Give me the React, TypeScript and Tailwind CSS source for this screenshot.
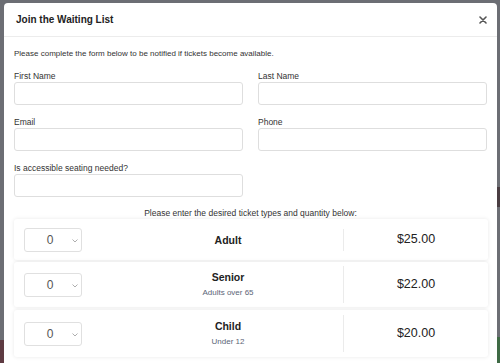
import React from 'react';

const tickets = [
  { name: 'Adult', note: '', price: '$25.00' },
  { name: 'Senior', note: 'Adults over 65', price: '$22.00' },
  { name: 'Child', note: 'Under 12', price: '$20.00' },
];

function Field({ label }: { label: string }) {
  return (
    <div>
      <div className="text-[8.5px] leading-[10px] text-[#333] mb-[1px]">{label}</div>
      <div className="h-[23px] rounded-[3px] border border-[#dedede] bg-white" />
    </div>
  );
}

export default function App() {
  return (
    <div
      className="relative h-[363px] w-[500px] overflow-hidden bg-[#6c6e74] pt-[3px] pl-[4px] pr-[3px]"
      style={{ fontFamily: '"Liberation Sans", Arial, sans-serif' }}
    >
      {/* bits of the page showing behind the overlay */}
      <div className="absolute left-0 top-[340px] h-[23px] w-[4px] bg-[#5e3b42]" />
      <div className="absolute right-0 top-[187px] h-[20px] w-[3px] bg-[#4a3d42]" />
      <div className="absolute right-0 top-[337px] h-[26px] w-[3px] bg-[#3f6a45]" />

      <div className="relative h-[400px] rounded-[4px] bg-white">
        <div className="flex h-[34px] items-center justify-between border-b border-[#ececec] pl-[12px] pr-[10px]">
          <h1 className="text-[10px] font-bold text-[#222]">Join the Waiting List</h1>
          <svg width="8" height="8" viewBox="0 0 8 8" className="mt-[1px]">
            <path d="M1 1L7 7M7 1L1 7" stroke="#555" strokeWidth="1.6" strokeLinecap="round" />
          </svg>
        </div>

        <div className="pl-[10px] pr-[10px] pt-[12px]">
          <p className="text-[8px] leading-[10px] text-[#333]">
            Please complete the form below to be notified if tickets become available.
          </p>

          <div className="mt-[12px] grid grid-cols-2 gap-x-[15px] gap-y-[12px]">
            <Field label="First Name" />
            <Field label="Last Name" />
            <Field label="Email" />
            <Field label="Phone" />
            <Field label="Is accessible seating needed?" />
          </div>

          <p className="mt-[11px] text-center text-[8.5px] leading-[10px] text-[#333]">
            Please enter the desired ticket types and quantity below:
          </p>

          <div className="mt-[1px] flex w-[474px] flex-col gap-[2px]">
            {tickets.map((t, i) => (
              <div
                key={t.name}
                className={`flex items-center rounded-[3px] bg-white shadow-[0_0_4px_rgba(0,0,0,0.09)] ${
                  i === 2 ? 'mt-[1px] py-[5px]' : 'py-[4px]'
                }`}
              >
                <div className="w-[99px] shrink-0 py-[4.5px] pl-[10px]">
                  <div className="relative flex h-[24px] w-[58px] items-center rounded-[3px] border border-[#e0e0e0] bg-white">
                    <span className="w-[50px] text-center text-[12px] text-[#555]">0</span>
                    <svg width="6" height="4" viewBox="0 0 6 4" className="absolute right-[3px] top-[10px]">
                      <path d="M0.5 0.5L3 3L5.5 0.5" fill="none" stroke="#999" strokeWidth="0.8" />
                    </svg>
                  </div>
                </div>
                <div className="flex flex-1 items-stretch">
                  <div className="flex w-[230px] flex-col items-center py-[5px]">
                    <div className="text-[10.5px] font-bold leading-[12px] text-[#222]">{t.name}</div>
                    {t.note && (
                      <div className="mt-[5px] text-[8px] leading-[10px] text-[#5b6577]">{t.note}</div>
                    )}
                  </div>
                  <div className="flex flex-1 items-center justify-center border-l border-[#ebebeb] text-[12.5px] text-[#222]">
                    {t.price}
                  </div>
                </div>
              </div>
            ))}
          </div>
        </div>
      </div>
    </div>
  );
}
